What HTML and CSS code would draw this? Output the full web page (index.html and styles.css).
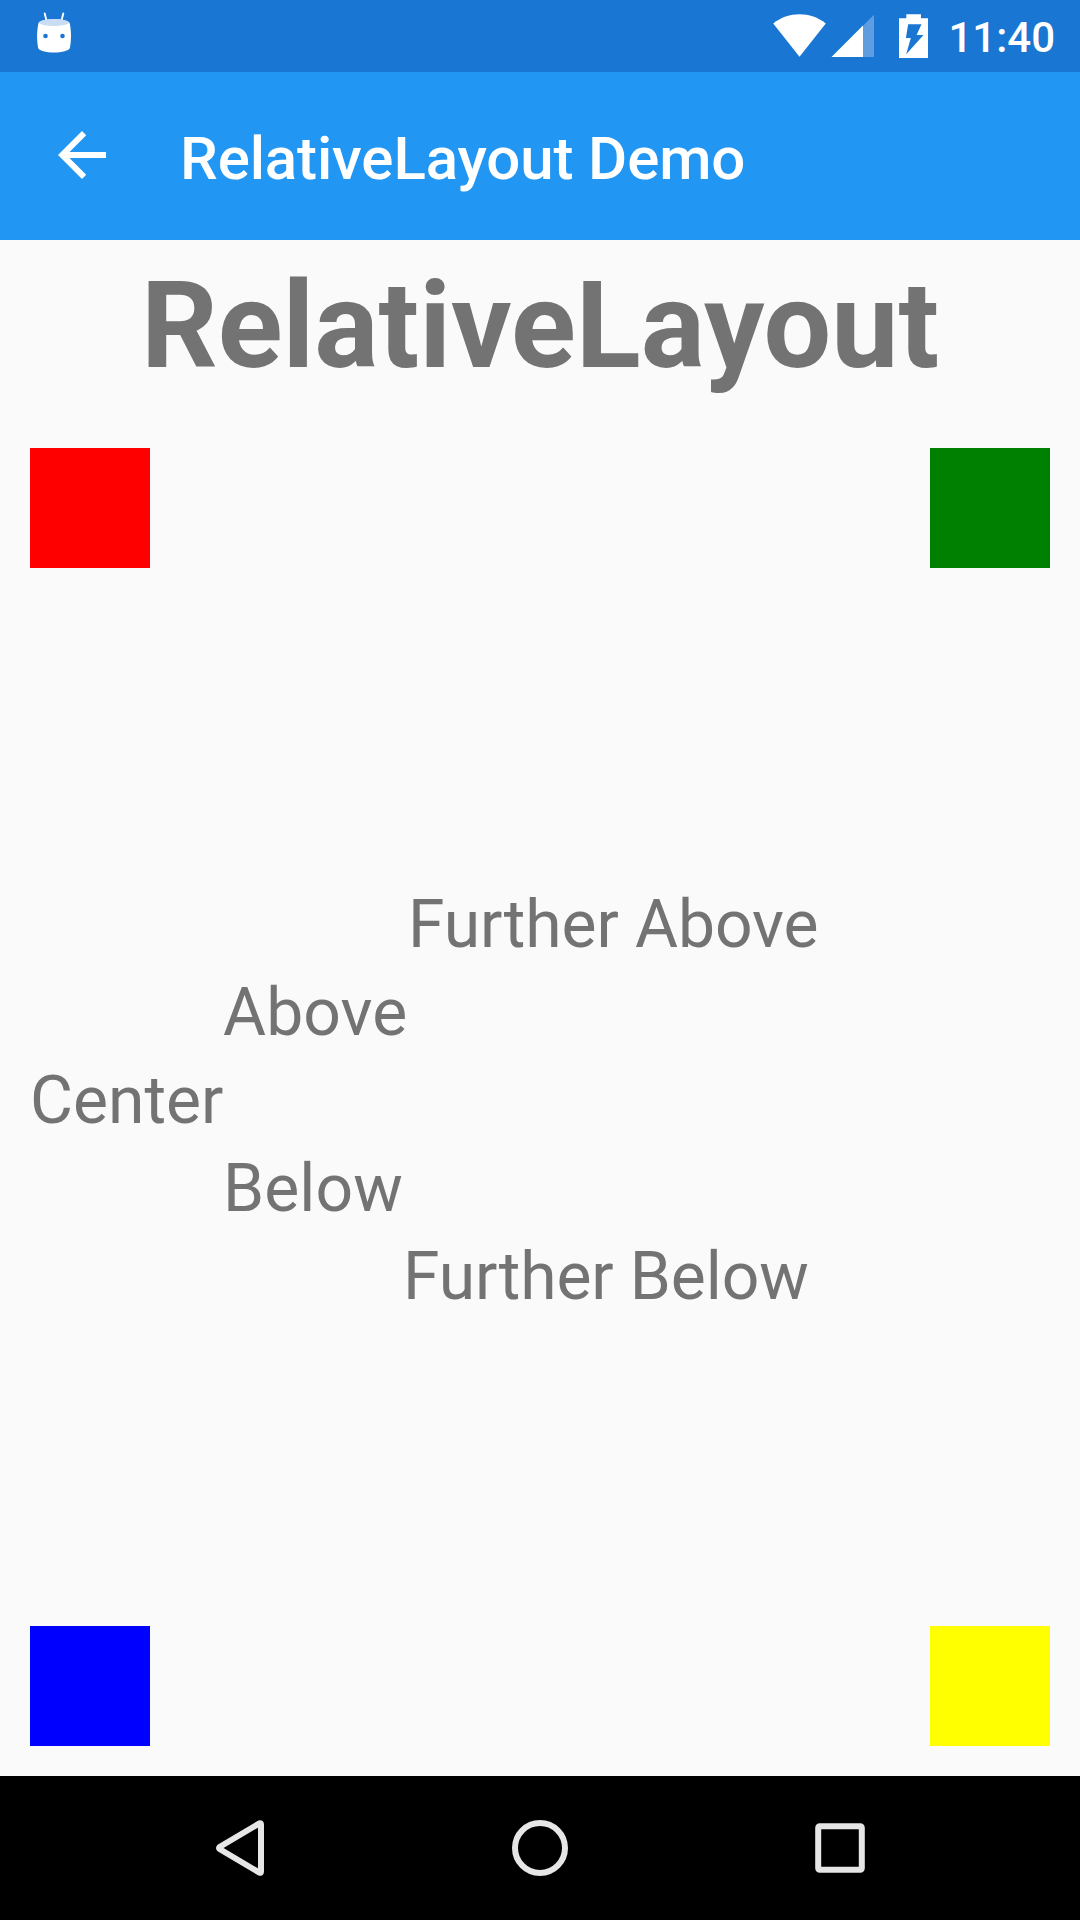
FILE: index.html
```html
<!DOCTYPE html>
<html lang="en">
<head>
<meta charset="utf-8">
<title>RelativeLayout Demo</title>
<link rel="stylesheet" href="styles.css">
</head>
<body>
<div class="screen">
  <div class="status">
    <svg class="droid" width="36" height="42" viewBox="36 12 36 42">
      <path d="M44.7 13.5 46.6 21M63.3 13.5 61.4 21" stroke="#fff" stroke-width="1.9" stroke-linecap="round"/>
      <path d="M38.500 23C42 18 66 18 69.700 23C71.400 31 71.400 40 70 47.500C69 54.200 39 54.200 38 47.500C36.700 40 36.700 31 38.500 23Z" fill="#fff"/>
      <ellipse cx="54" cy="22.500" rx="14.500" ry="3.600" fill="#c8dcf4"/>
      <circle cx="45.500" cy="36" r="2.300" fill="#1976d2"/>
      <circle cx="62.500" cy="36" r="2.300" fill="#1976d2"/>
    </svg>
    <div class="indicators">
      <svg class="wifi" width="54" height="44" viewBox="0 0 54 44"><path d="M26.500 42.800.2 9.500C15.500-2.700 37.500-2.700 52.800 9.500Z" fill="#fff"/></svg>
      <svg class="signal" width="44" height="44" viewBox="0 0 44 44"><path d="M1 43 43 .7V43Z" fill="#5e9ee0"/><path d="M.5 43 32 11.500V43Z" fill="#fff"/></svg>
      <svg class="battery" width="30" height="46" viewBox="0 0 30 46"><path d="M7.300.2H22V4.200H29V44H0V4.200H7.300Z" fill="#fff"/><path d="M9.200 10.300H22.500L17.600 20.900H24.500L7.200 40.300 11.800 24.100H6.900Z" fill="#1976d2"/></svg>
      <span class="time">11:40</span>
    </div>
  </div>
  <header class="appbar">
    <svg class="back" width="72" height="72" viewBox="0 0 24 24"><path d="M20 11H7.830l5.590-5.590L12 4l-8 8 8 8 1.410-1.410L7.830 13H20v-2z" fill="#fff"/></svg>
    <h1 class="title">RelativeLayout Demo</h1>
  </header>
  <main class="page">
    <h2 class="heading">RelativeLayout</h2>
    <div class="corners">
      <div class="box red"></div>
      <div class="box green"></div>
    </div>
    <div class="steps">
      <div class="far-above">Further Above</div>
      <div class="near">Above</div>
      <div>Center</div>
      <div class="near">Below</div>
      <div class="far-below">Further Below</div>
    </div>
    <div class="corners">
      <div class="box blue"></div>
      <div class="box yellow"></div>
    </div>
  </main>
  <nav class="navbar">
    <svg width="60" height="60" viewBox="0 0 60 60"><path d="M49.500 5.300Q51 4.800 51 6.300V53.700Q51 55.200 49.500 54.700L9.500 31Q8.500 30 9.500 29Z" class="line"/></svg>
    <svg width="60" height="60" viewBox="0 0 60 60"><circle cx="30" cy="30" r="25" class="line"/></svg>
    <svg width="60" height="60" viewBox="0 0 60 60"><rect x="8.200" y="8.200" width="43.600" height="43.600" rx="1.500" class="line"/></svg>
  </nav>
</div>
</body>
</html>
```
FILE: styles.css
```css
body {
  margin: 0;
  font-family: Roboto, sans-serif;
}

.screen {
  width: 1080px;
  height: 1920px;
  display: flex;
  flex-direction: column;
  background: #fafafa;
  overflow: hidden;
}

.status {
  height: 72px;
  box-sizing: border-box;
  padding: 0 25px 0 36px;
  display: flex;
  justify-content: space-between;
  background: #1976d2;
}

.droid {
  margin-top: 12px;
}

.indicators {
  display: flex;
}

.wifi {
  margin: 14px 4px 0 0;
}

.signal {
  margin: 14px 24px 0 0;
}

.battery {
  margin: 14px 19px 0 0;
}

.time {
  color: #fff;
  font-size: 42px;
  font-weight: 500;
  line-height: 76px;
}

.appbar {
  height: 168px;
  box-sizing: border-box;
  padding-left: 46px;
  display: flex;
  background: #2196f3;
}

.back {
  margin: 47px 62px 0 0;
}

.title {
  margin: 0;
  color: #fff;
  font-size: 60px;
  font-weight: 500;
  letter-spacing: -0.12px;
  line-height: 173px;
}

.page {
  height: 1536px;
  box-sizing: border-box;
  padding: 0 30px 30px;
  display: flex;
  flex-direction: column;
  color: #737373;
}

.heading {
  margin: 0 0 36px;
  font-size: 120px;
  font-weight: 700;
  line-height: 172px;
  text-align: center;
}

.corners {
  display: flex;
  justify-content: space-between;
}

.box {
  width: 120px;
  height: 120px;
}

.red {
  background: #f00;
}

.green {
  background: #008000;
}

.blue {
  background: #00f;
}

.yellow {
  background: #ff0;
}

.steps {
  flex: 1;
  padding-top: 313px;
  font-size: 66px;
  line-height: 88px;
}

.near {
  margin-left: 193px;
  letter-spacing: 0.1px;
}

.far-above {
  margin-left: 378px;
  letter-spacing: -0.1px;
}

.far-below {
  margin-left: 373px;
  letter-spacing: -0.12px;
}

.navbar {
  height: 144px;
  display: flex;
  align-items: center;
  justify-content: center;
  gap: 240px;
  background: #000;
}

.line {
  fill: none;
  stroke: #e6e6e6;
  stroke-width: 6px;
  stroke-linejoin: round;
}
```
